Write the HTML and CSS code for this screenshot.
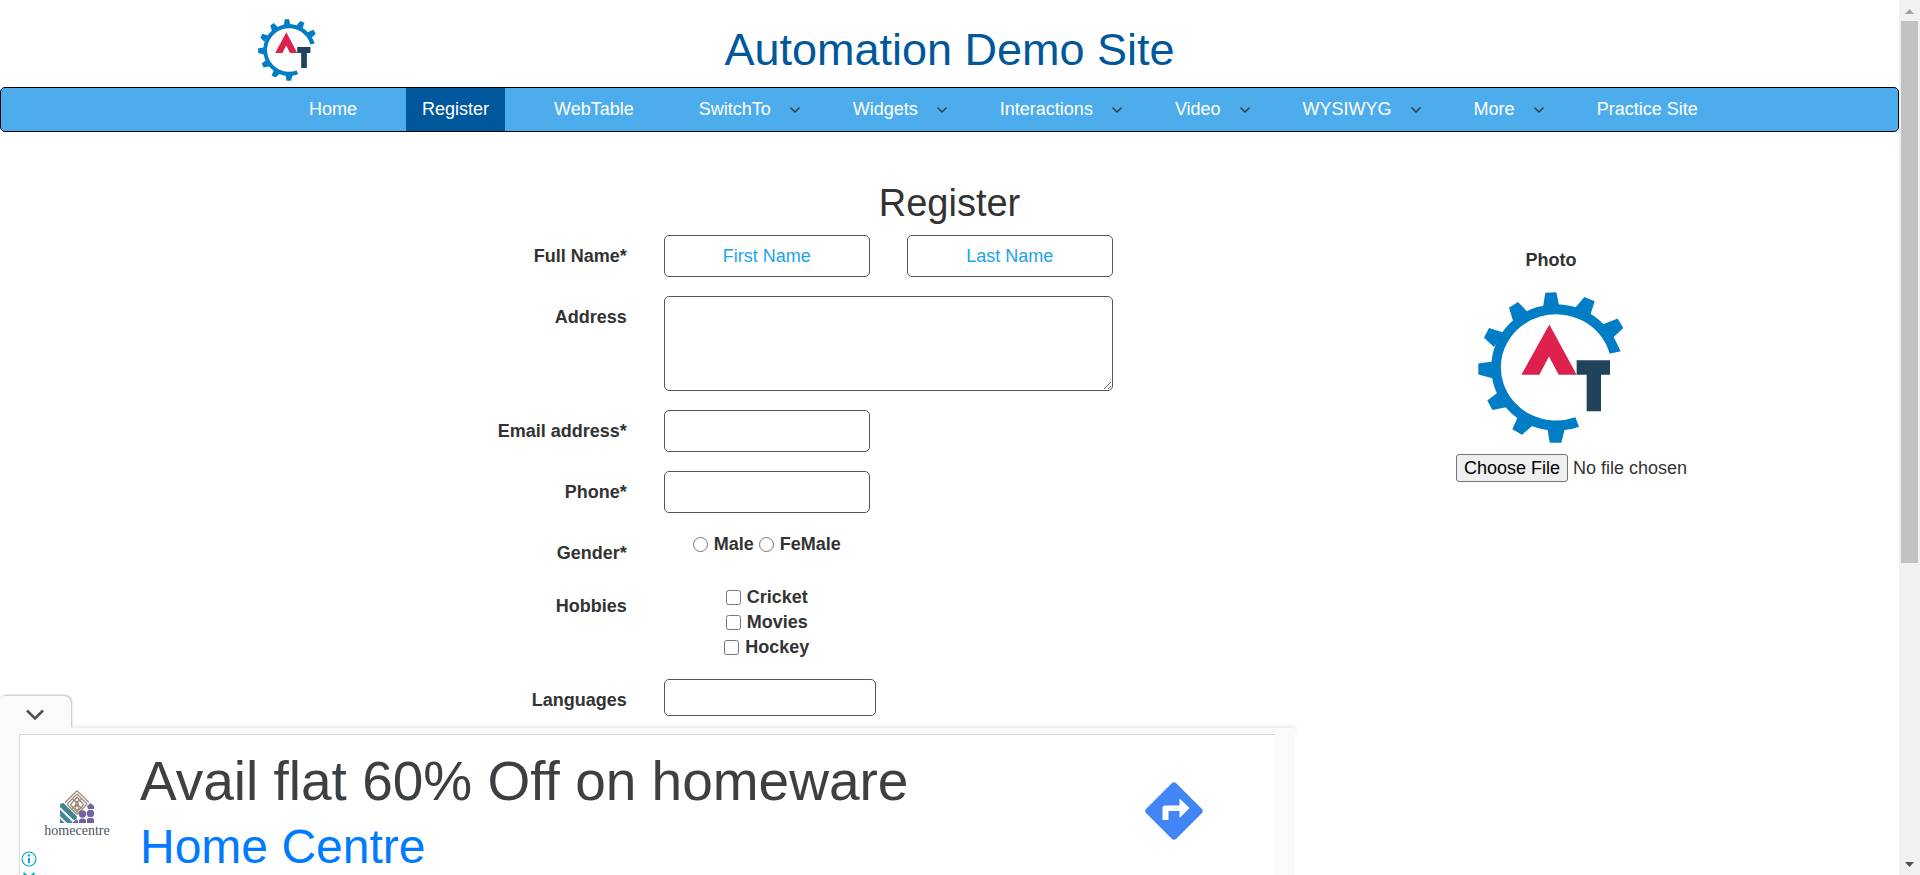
FILE: index.html
```html
<!DOCTYPE html>
<html lang="en">
<head>
<meta charset="utf-8">
<title>Register</title>
<link rel="stylesheet" href="styles.css">
</head>
<body>
<svg class="defs" aria-hidden="true">
  <symbol id="gear" viewBox="178 185 438 452" preserveAspectRatio="none">
    <g fill="#007dc5">
      <path d="M601 362A195 189 0 1 0 481 588L470 560A166 159 0 1 1 573 370Z"/>
      <path d="M373 230L380 187L413 186L422 230Z"/>
      <path d="M469 233L497 200L528 213L515 254Z"/>
      <path d="M552 282L597 264L614 293L585 320L606 362L585 367Z"/>
      <path d="M271 232L298 215L328 246L284 274Z"/>
      <path d="M196 322L211 293L254 306L226 350Z"/>
      <path d="M179 399L222 393L224 444L179 432Z"/>
      <path d="M206 510L237 486L267 529L221 538Z"/>
      <path d="M281 596L297 560L343 584L310 612Z"/>
      <path d="M386 592L439 592L428 636L393 636Z"/>
    </g>
    <path fill="#dd204e" d="M392 282L474 433H420L391 378L362 433H308Z"/>
    <path fill="#20425b" d="M474 389H574V433H547V542H504V433H474Z"/>
  </symbol>
  <symbol id="chevron" viewBox="0 0 10 6">
    <path d="M0.500 0.500L5 5L9.500 0.500" fill="none" stroke="#333" stroke-width="1.300"/>
  </symbol>
</svg>

<div class="window">
  <div class="page">
    <header class="header">
      <svg class="logo" role="img" aria-label="Logo"><use href="#gear"/></svg>
      <h1 class="site-title">Automation Demo Site</h1>
    </header>

    <nav class="nav">
      <ul class="nav-list">
        <li><a href="#">Home</a></li>
        <li class="active"><a href="#">Register</a></li>
        <li><a href="#">WebTable</a></li>
        <li><a href="#">SwitchTo</a><svg class="caret"><use href="#chevron"/></svg></li>
        <li><a href="#">Widgets</a><svg class="caret"><use href="#chevron"/></svg></li>
        <li><a href="#">Interactions</a><svg class="caret"><use href="#chevron"/></svg></li>
        <li><a href="#">Video</a><svg class="caret"><use href="#chevron"/></svg></li>
        <li><a href="#">WYSIWYG</a><svg class="caret"><use href="#chevron"/></svg></li>
        <li><a href="#">More</a><svg class="caret"><use href="#chevron"/></svg></li>
        <li><a href="#">Practice Site</a></li>
      </ul>
    </nav>

    <main>
      <h2 class="heading">Register</h2>
      <form class="layout">
        <div class="fields">
          <div class="row">
            <label class="name" for="first">Full Name*</label>
            <input class="box" id="first" type="text" placeholder="First Name">
            <input class="box" type="text" placeholder="Last Name" aria-label="Last Name">
          </div>
          <div class="row">
            <label class="name" for="address">Address</label>
            <textarea class="box area" id="address"></textarea>
          </div>
          <div class="row">
            <label class="name" for="email">Email address*</label>
            <input class="box" id="email" type="email">
          </div>
          <div class="row">
            <label class="name" for="phone">Phone*</label>
            <input class="box" id="phone" type="tel">
          </div>
          <div class="row">
            <span class="name" id="gender">Gender*</span>
            <div class="radios" role="group" aria-labelledby="gender">
              <label class="choice"><input type="radio" name="gender">Male</label>
              <label class="choice"><input type="radio" name="gender">FeMale</label>
            </div>
          </div>
          <div class="row">
            <span class="name" id="hobbies">Hobbies</span>
            <div class="checks" role="group" aria-labelledby="hobbies">
              <label class="choice"><input type="checkbox">Cricket</label>
              <label class="choice"><input type="checkbox">Movies</label>
              <label class="choice"><input type="checkbox">Hockey</label>
            </div>
          </div>
          <div class="row">
            <label class="name" for="languages">Languages</label>
            <input class="box languages" id="languages" type="text">
          </div>
        </div>
        <div class="photo">
          <label class="photo-label" for="photo">Photo</label>
          <svg class="photo-image" role="img" aria-label="Photo preview"><use href="#gear"/></svg>
          <input class="file" id="photo" type="file">
        </div>
      </form>
    </main>
  </div>

  <div class="scrollbar" aria-hidden="true">
    <svg class="arrow" viewBox="0 0 9 5"><path fill="#a3a3a3" d="M0 5L4.500 0L9 5Z"/></svg>
    <div class="track"><div class="thumb"></div></div>
    <svg class="arrow" viewBox="0 0 9 5"><path fill="#505050" d="M0 0H9L4.500 5Z"/></svg>
  </div>
</div>

<aside class="ad">
  <button class="ad-tab" type="button" aria-label="Hide ad">
    <svg class="ad-chevron" viewBox="0 0 18 12"><path d="M1 1.500L9 9.500L17 1.500" fill="none" stroke="#505050" stroke-width="2.500"/></svg>
  </button>
  <div class="ad-bar"></div>
  <div class="ad-frame">
    <div class="ad-body">
      <div class="ad-brand">
        <svg class="brand-mark" viewBox="0 0 34 33" aria-hidden="true">
          <g fill="none" stroke="#a18d7c" stroke-width="1.300">
            <path d="M17 0.800L29 12.500M17 0.800L5 12.500M17 4L27 14M17 4L7 14M17 7L23.500 14.500L17 22L10.500 14.500ZM17 24.500L27 14M17 24.500L7 14"/>
            <path d="M12 8.500L17 13L22 8.500M12 18.500L17 14L22 18.500"/>
            <circle cx="17" cy="10" r="1.800"/><circle cx="17" cy="18" r="1.800"/><circle cx="17" cy="14" r="1.500"/>
          </g>
          <g fill="#438591">
            <path d="M0 14L3.500 13L17 26.500V28L14 30.500L0 17Z"/>
            <path d="M0 19.500L12.500 32V33H7L0 26Z"/>
            <path d="M0 28.500L4.500 33H0Z"/>
          </g>
          <g fill="#7463a3">
            <path d="M27 16L30.500 13L34 16V19H28Z"/>
            <circle cx="30.500" cy="23.500" r="3.700"/><circle cx="22.500" cy="24" r="3.700"/>
            <path d="M27 29L29 28H33L34 30V33H27ZM19 30L21 28.500H24L26 30V33H19ZM12.500 33L16.500 29L18 31V33Z"/>
          </g>
        </svg>
        <span class="brand-name">homecentre</span>
      </div>
      <div class="ad-copy">
        <div class="ad-title">Avail flat 60% Off on homeware</div>
        <a class="ad-link" href="#">Home Centre</a>
      </div>
      <svg class="ad-go" viewBox="0 0 58 58" role="img" aria-label="Directions">
        <path fill="#4285f4" d="M27 1Q29 -0.500 31 1L57 27Q58.500 29 57 31L31 57Q29 58.500 27 57L1 31Q-0.500 29 1 27Z"/>
        <path fill="#fff" d="M17.500 38V26Q17.500 23.500 20 23.500H34.500V16.500L44.500 26L34.500 36V29H23.500V38Z"/>
      </svg>
      <div class="ad-choices">
        <svg viewBox="0 0 16 24" class="choices-icon" aria-hidden="true">
          <g fill="none" stroke="#00aecd">
            <circle cx="8" cy="8" r="7" stroke-width="1.200"/>
            <path d="M8 7V12" stroke-width="2"/>
            <path d="M2.500 22L8 27L13.500 22" stroke-width="2"/>
          </g>
          <circle cx="8" cy="4.500" r="1.200" fill="#00aecd"/>
        </svg>
      </div>
    </div>
  </div>
</aside>
</body>
</html>
```
FILE: styles.css
```css
* {
  box-sizing: border-box;
}

body {
  margin: 0;
  color: #333;
  background: #fff;
  font: 18px/25px "Liberation Sans", Arial, sans-serif;
}

input,
textarea,
button {
  font: inherit;
  color: inherit;
}

.defs {
  display: none;
}

.window {
  display: flex;
  height: 100vh;
  overflow: hidden;
}

.page {
  flex: 1;
  min-width: 0;
}

/* Header */

.header {
  display: grid;
  grid-template-columns: 1fr auto 1fr;
  align-items: center;
  max-width: 1463px;
  height: 87px;
  margin: 0 auto;
  padding: 13px 0 0 40px;
}

.header::after {
  content: "";
  margin-right: 40px;
}

.logo {
  width: 58px;
  height: 62px;
}

.site-title {
  margin: 0 40px 0 0;
  color: #00579c;
  font-size: 45px;
  font-weight: 400;
  line-height: 50px;
}

.nav {
  border: 1px solid #000;
  border-radius: 5px;
  background: #4dadec;
}

.nav-list {
  display: flex;
  gap: 33px;
  max-width: 1463px;
  margin: 0 auto;
  padding: 0 0 0 75px;
  list-style: none;
}

.nav-list li {
  display: flex;
  align-items: center;
}

.nav-list a {
  padding: 9px 16px;
  color: #fff;
  text-decoration: none;
  white-space: nowrap;
}

.nav-list .active {
  background: #00579c;
}

.caret {
  width: 10px;
  height: 6px;
  margin: 0 4px 0 3px;
}

/* Form */

.heading {
  margin: 50px 0 11px;
  font-size: 38px;
  font-weight: 400;
  line-height: 42px;
  text-align: center;
}

.layout {
  display: flex;
}

.fields {
  display: flex;
  flex-direction: column;
  gap: 19px;
  width: 58.6%;
}

.row {
  display: grid;
  grid-template-columns: 1fr 206px 206px;
  gap: 37px;
  align-items: start;
}

.name {
  padding-top: 9px;
  font-weight: 700;
  text-align: right;
}

.box {
  width: 100%;
  height: 42px;
  padding: 0 14px;
  border: 1px solid #555;
  border-radius: 5px;
  background: #fff;
  text-align: center;
}

.box::placeholder {
  color: #1ca3ec;
  opacity: 1;
}

.area {
  grid-column: 2 / 4;
  height: 95px;
  resize: vertical;
}

.languages {
  width: 212px;
  height: 37px;
}

.radios {
  display: flex;
  justify-content: center;
  gap: 5px;
}

.checks {
  display: flex;
  flex-direction: column;
  align-items: center;
}

.choice {
  display: flex;
  align-items: center;
  gap: 6px;
  font-weight: 700;
}

.choice input {
  width: 15px;
  height: 15px;
  margin: 0;
}

.photo {
  display: flex;
  flex: 1;
  flex-direction: column;
  align-items: center;
  padding: 13px 0 0 90px;
}

.photo-label {
  font-weight: 700;
}

.photo-image {
  width: 146px;
  height: 151px;
  margin: 19px 0 11px;
}

.file {
  width: 236px;
  margin-left: 46px;
  line-height: 28px;
}

.file::file-selector-button {
  height: 28px;
  margin: 0 5px 0 0;
  padding: 0 7px;
  border: 1px solid #767676;
  border-radius: 3px;
  background: #efefef;
  color: #000;
  font: inherit;
  line-height: 24px;
}

/* Scrollbar */

.scrollbar {
  display: flex;
  flex-direction: column;
  align-items: center;
  width: 21px;
  padding: 9px 0 8px;
  background: #f1f1f1;
}

.arrow {
  width: 9px;
  height: 5px;
}

.track {
  flex: 1;
  width: 17px;
  padding: 7px 0;
}

.thumb {
  height: 65%;
  background: #c1c1c1;
}

/* Anchored ad */

.ad {
  position: fixed;
  bottom: 0;
  left: 0;
  width: 68.2%;
  max-width: 1295px;
}

.ad-tab {
  position: relative;
  z-index: 1;
  display: block;
  width: 71px;
  height: 32px;
  padding: 5px 0 0 26px;
  border: 0;
  border-radius: 5px 7px 0 0;
  background: #fafafa;
  box-shadow: 1px -1px 2px rgba(0, 0, 0, 0.25);
  clip-path: inset(-4px -4px 0 0);
  text-align: left;
}

.ad-chevron {
  display: block;
  width: 18px;
  height: 12px;
}

.ad-bar {
  height: 6px;
  background: #fafafa;
  box-shadow: 0 -1px 5px rgba(0, 0, 0, 0.12);
}

.ad-frame {
  position: relative;
  padding: 0 20px 0 19px;
  background: #fafafa;
}

.ad-body {
  display: flex;
  height: 141px;
  overflow: hidden;
  border-top: 1px solid #d5d8d7;
  border-left: 1px solid #ddd;
  background: #fff;
}

.ad-brand {
  display: flex;
  flex-direction: column;
  align-items: center;
  width: 114px;
  padding: 55px 0 0;
}

.brand-mark {
  width: 34px;
  height: 33px;
}

.brand-name {
  color: #4a5560;
  font: 14px/16px "Liberation Serif", serif;
}

.ad-copy {
  flex: 1;
  padding: 11px 0 0 6px;
  white-space: nowrap;
}

.ad-title {
  color: #3c4043;
  font-size: 55px;
  line-height: 70px;
}

.ad-link {
  display: block;
  color: #007bff;
  font-size: 48px;
  line-height: 62px;
  text-decoration: none;
}

.ad-go {
  width: 58px;
  height: 58px;
  margin: 47px 72px 0 0;
}

.ad-choices {
  position: absolute;
  bottom: 0;
  left: 21px;
}

.choices-icon {
  display: block;
  width: 16px;
  height: 24px;
}
```
